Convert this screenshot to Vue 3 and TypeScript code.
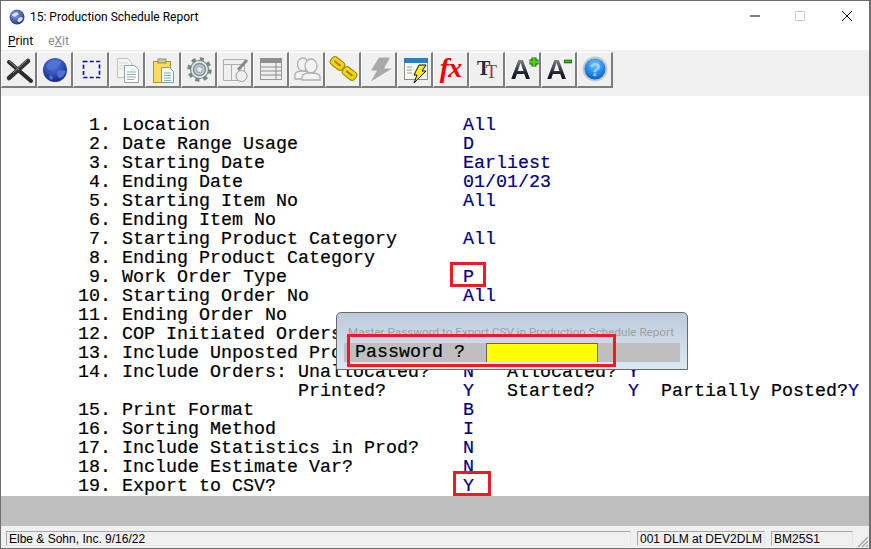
<script setup lang="ts">
interface Part { text: string; value?: boolean }
const pad = (s: string, n: number) => s.padEnd(n, ' ')
const row = (num: string, label: string, value = ''): Part[] => [
  { text: pad(num.padStart(10, ' ') + ' ' + label, 42) },
  { text: value, value: true },
]
const rows: Part[][] = [
  row('1.', 'Location', 'All'),
  row('2.', 'Date Range Usage', 'D'),
  row('3.', 'Starting Date', 'Earliest'),
  row('4.', 'Ending Date', '01/01/23'),
  row('5.', 'Starting Item No', 'All'),
  row('6.', 'Ending Item No'),
  row('7.', 'Starting Product Category', 'All'),
  row('8.', 'Ending Product Category'),
  row('9.', 'Work Order Type', 'P'),
  row('10.', 'Starting Order No', 'All'),
  row('11.', 'Ending Order No'),
  row('12.', 'COP Initiated Orders'),
  row('13.', 'Include Unposted Prod'),
  [
    { text: pad('       14. Include Orders: Unallocated?', 42) },
    { text: 'N', value: true },
    { text: '   Allocated? ' },
    { text: 'Y', value: true },
  ],
  [
    { text: pad('', 27) + pad('Printed?', 15) },
    { text: 'Y', value: true },
    { text: '   Started?   ' },
    { text: 'Y', value: true },
    { text: '  Partially Posted?' },
    { text: 'Y', value: true },
  ],
  row('15.', 'Print Format', 'B'),
  row('16.', 'Sorting Method', 'I'),
  row('17.', 'Include Statistics in Prod?', 'N'),
  row('18.', 'Include Estimate Var?', 'N'),
  row('19.', 'Export to CSV?', 'Y'),
]
</script>

<template>
  <div class="window">
    <header class="titlebar">
      <svg class="app-icon" width="16" height="16" viewBox="0 0 16 16">
        <defs>
          <radialGradient id="ti" cx="0.4" cy="0.35" r="0.7">
            <stop offset="0" stop-color="#8fa8e8" />
            <stop offset="1" stop-color="#1c2f8c" />
          </radialGradient>
        </defs>
        <circle cx="8" cy="8" r="7.5" fill="url(#ti)" />
        <path d="M3 6c2-3 5-3 6-2s-1 2-2 3-3 1-4-1zM9 10c1-2 4-2 5-1-1 3-3 4-4 4s-2-2-1-3z" fill="#dfe7fa" />
      </svg>
      <span class="title">15: Production Schedule Report</span>
      <div class="caption">
        <svg width="46" height="16" viewBox="0 0 46 16"><path d="M18 8h10" stroke="#000" stroke-width="1" /></svg>
        <svg width="46" height="16" viewBox="0 0 46 16"><rect x="17.5" y="3.5" width="9" height="9" fill="none" stroke="#ccc" /></svg>
        <svg width="46" height="16" viewBox="0 0 46 16"><path d="M18 3l10 10M28 3L18 13" stroke="#111" stroke-width="1" /></svg>
      </div>
    </header>

    <nav class="menubar">
      <span class="menu"><u>P</u>rint</span>
      <span class="menu off">e<u>X</u>it</span>
    </nav>

    <div class="toolbar">
      <div class="tool">
        <svg viewBox="0 0 36 37">
          <path d="M8 12l22 19" stroke="#2b2b2b" stroke-width="4" stroke-linecap="round" />
          <path d="M27 11L8 28" stroke="#333" stroke-width="4.500" stroke-linecap="round" />
          <path d="M8 11l10 9M26 10L12 23" stroke="#8a8a8a" stroke-width="1" />
        </svg>
      </div>
      <div class="tool">
        <svg viewBox="0 0 36 37">
          <defs>
            <radialGradient id="gl" cx="0.45" cy="0.3" r="0.75">
              <stop offset="0" stop-color="#5b7fe0" />
              <stop offset="1" stop-color="#0e1f86" />
            </radialGradient>
          </defs>
          <circle cx="18" cy="20" r="12" fill="url(#gl)" />
          <path d="M10 14c4-4 10-5 13-3s-2 5-5 5-1 4-4 4-5-3-4-6zM21 21c3-1 6-1 8 0-1 4-4 7-6 7s-4-5-2-7zM13 25l3 2-1 3-3-2z" fill="#4f73d4" />
        </svg>
      </div>
      <div class="tool">
        <svg viewBox="0 0 36 37">
          <rect x="10.500" y="11.500" width="16" height="16" fill="none" stroke="#0000ff" stroke-width="1.600" stroke-dasharray="4 2.300" />
        </svg>
      </div>
      <div class="tool">
        <svg viewBox="0 0 36 37">
          <path d="M8.500 8.500h10l4 4v15h-14z" fill="#f4f7f1" stroke="#b5c9b8" />
          <path d="M10 13h9M10 16h9M10 19h9" stroke="#cddccf" />
          <path d="M15.500 15.500h10l4 4v13h-14z" fill="#fdfdfd" stroke="#8fa5a5" />
          <path d="M18 22h9M18 24.500h9M18 27h9M18 29.500h7" stroke="#8fb3aa" />
        </svg>
      </div>
      <div class="tool">
        <svg viewBox="0 0 36 37">
          <rect x="8.500" y="11.500" width="17" height="21" fill="#f4df60" stroke="#bf8a2a" />
          <rect x="13" y="9" width="8" height="4" fill="#c8c8a0" stroke="#8f8f6a" />
          <path d="M16.500 17.500h8l4 4v11h-12z" fill="#f8f8f8" stroke="#7e9a9a" />
          <path d="M19 23h7M19 25.500h7M19 28h7M19 30.500h7" stroke="#7fb0a8" />
        </svg>
      </div>
      <div class="tool">
        <svg viewBox="0 0 36 37">
          <circle cx="18.500" cy="19.500" r="10.500" fill="none" stroke="#6f8a84" stroke-width="3.400" stroke-dasharray="4.120 4.120" />
          <circle cx="18.500" cy="19.500" r="9" fill="#e8e8e4" stroke="#6f8a84" stroke-width="1.200" />
          <circle cx="18.500" cy="19.500" r="6" fill="#c2ccd6" stroke="#7d8c98" stroke-width="1.500" />
          <circle cx="18.500" cy="19.500" r="3" fill="#e8ecef" stroke="#8c9aa6" />
        </svg>
      </div>
      <div class="tool">
        <svg viewBox="0 0 36 37">
          <path d="M6.500 9.500h21v21h-21zM6.500 14.500h21M14.500 14.500v16" fill="none" stroke="#aeaeae" />
          <path d="M21 20l9-10" stroke="#8a8a8a" stroke-width="3" />
          <circle cx="24.500" cy="26" r="5.500" fill="#efefef" stroke="#999" />
        </svg>
      </div>
      <div class="tool">
        <svg viewBox="0 0 36 37">
          <rect x="7.500" y="8.500" width="21" height="21" fill="#efefef" stroke="#9b9b9b" />
          <rect x="7" y="8" width="22" height="5" fill="#8f8f8f" />
          <path d="M8 17h20M8 21h20M8 25h20M23 13v17" stroke="#8c8c8c" />
        </svg>
      </div>
      <div class="tool">
        <svg viewBox="0 0 36 37" fill="#f3f3f3" stroke="#b0b0b0" stroke-width="1.300">
          <ellipse cx="14" cy="14.500" rx="5.500" ry="6.500" />
          <path d="M6 29v-4c0-3 4-4 8-4s6 2 6 4v4z" />
          <ellipse cx="22" cy="16" rx="6" ry="7" />
          <path d="M13 30v-3c0-3 4-4 9-4s9 1 9 4v3z" />
        </svg>
      </div>
      <div class="tool">
        <svg viewBox="0 0 36 37">
          <g fill="none" stroke="#9a8500" stroke-width="5" stroke-linejoin="round">
            <rect x="7" y="11" width="11" height="5" rx="1.500" transform="rotate(38 12.500 13.500)" />
            <rect x="19" y="21" width="11" height="5" rx="1.500" transform="rotate(38 24.500 23.500)" />
          </g>
          <g fill="none" stroke="#f3d21a" stroke-width="3" stroke-linejoin="round">
            <rect x="7" y="11" width="11" height="5" rx="1.500" transform="rotate(38 12.500 13.500)" />
            <rect x="19" y="21" width="11" height="5" rx="1.500" transform="rotate(38 24.500 23.500)" />
          </g>
        </svg>
      </div>
      <div class="tool">
        <svg viewBox="0 0 36 37">
          <path d="M17 8h11l-6 11h8L9 32l6-11h-6z" fill="#a9a9a9" transform="translate(1 -0.500)" />
        </svg>
      </div>
      <div class="tool">
        <svg viewBox="0 0 36 37">
          <rect x="7.500" y="8.500" width="23" height="21" fill="#f6f6ee" stroke="#8d8d8d" />
          <rect x="7" y="8" width="24" height="5" fill="#2e7fc0" />
          <path d="M10 17h5M10 20h5M10 23h5" stroke="#a9c8a8" stroke-width="1.500" />
          <path d="M22 15h7l-4 6h4L17 33l3-8h-3z" fill="#ffe81a" stroke="#111" stroke-width="1" />
        </svg>
      </div>
      <div class="tool"><span class="fx">fx</span></div>
      <div class="tool tt">
        <span class="tt-a">T</span><span class="tt-b">T</span>
      </div>
      <div class="tool">
        <span class="big-a">A</span>
        <svg class="over" viewBox="0 0 36 37">
          <path d="M24.500 12h9M29 7.500v9" stroke="#0b5d05" stroke-width="5" />
          <path d="M25 12h8M29 8v8" stroke="#4fd11a" stroke-width="2.800" />
        </svg>
      </div>
      <div class="tool">
        <span class="big-a">A</span>
        <svg class="over" viewBox="0 0 36 37">
          <path d="M23 11.500h8" stroke="#0b5d05" stroke-width="3.500" />
          <path d="M23.500 11.500h7" stroke="#4fd11a" stroke-width="1.500" />
        </svg>
      </div>
      <div class="tool">
        <svg viewBox="0 0 36 37">
          <defs>
            <radialGradient id="hp" cx="0.5" cy="0.3" r="0.75">
              <stop offset="0" stop-color="#7cc4ff" />
              <stop offset="0.6" stop-color="#1f86ec" />
              <stop offset="1" stop-color="#0a58c4" />
            </radialGradient>
          </defs>
          <circle cx="18" cy="19" r="12.500" fill="#c8c8c8" />
          <circle cx="18" cy="19" r="10.500" fill="url(#hp)" />
          <text x="18" y="26" text-anchor="middle" class="qm">?</text>
        </svg>
      </div>
    </div>

    <main class="screen">
      <div class="paper">
        <div v-for="(parts, i) in rows" :key="i" class="line">
          <span v-for="(p, j) in parts" :key="j" :class="{ val: p.value }">{{ p.text }}</span>
        </div>
      </div>
      <div class="floor"></div>

      <div class="mark mark-p"></div>
      <div class="mark mark-y"></div>

      <section class="dialog">
        <div class="dlg-title">Master Password to Export CSV in Production Schedule Report</div>
        <div class="dlg-bar">
          <span class="dlg-label">Password ?</span>
          <span class="dlg-field"></span>
        </div>
      </section>
      <div class="mark mark-pw"></div>
    </main>

    <footer class="statusbar">
      <span class="panel wide">Elbe &amp; Sohn, Inc. 9/16/22</span>
      <span class="panel who">001 DLM at DEV2DLM</span>
      <span class="panel code">BM25S1</span>
      <svg class="grip" width="14" height="14" viewBox="0 0 14 14">
        <path d="M13 3L3 13M13 7L7 13M13 11l-2 2" stroke="#a0a0a0" stroke-width="1.200" />
      </svg>
    </footer>
  </div>
</template>

<style scoped>
.window {
  width: 871px;
  height: 549px;
  box-sizing: border-box;
  border: 1px solid #6e6e6e;
  border-right-width: 2px;
  border-bottom-width: 1px;
  display: flex;
  flex-direction: column;
  background: #f0f0f0;
  overflow: hidden;
}
.titlebar {
  height: 31px;
  flex: none;
  background: #fff;
  display: flex;
  align-items: center;
  padding-left: 8px;
  font: 12px Roboto, "Noto Sans", sans-serif;
  color: #000;
}
.app-icon { margin-right: 5px; }
.title { flex: 1; }
.caption { display: flex; margin-right: -1px; margin-bottom: 2px; }
.menubar {
  height: 18px;
  flex: none;
  background: #fff;
  display: flex;
  gap: 15px;
  padding-left: 7px;
  align-items: center;
  font: 12px Roboto, "Noto Sans", sans-serif;
  color: #000;
}
.menu.off { color: #8a8a8a; }
.toolbar {
  height: 46px;
  flex: none;
  display: flex;
  align-items: flex-start;
  padding-top: 2px;
  box-sizing: border-box;
  background: #f0f0f0;
}
.tool {
  width: 36px;
  height: 36px;
  flex: none;
  box-sizing: border-box;
  position: relative;
  background: #f0f0f0;
  border-top: 1px solid #fff;
  border-left: 1px solid #fff;
  border-right: 2px solid #7d7d7d;
  border-bottom: 2px solid #7d7d7d;
  display: flex;
  align-items: center;
  justify-content: center;
  overflow: hidden;
}
.tool > svg { position: absolute; left: -1px; top: -3px; width: 36px; height: 37px; }
.fx {
  font: italic bold 28px "Liberation Serif", serif;
  color: #f00000;
  letter-spacing: -1px;
  margin-top: -4px;
}
.tt-a, .tt-b {
  font-family: "Liberation Serif", serif;
  font-weight: bold;
  position: absolute;
}
.tt-a { font-size: 20px; color: #26263c; left: 7px; top: 4px; }
.tt-b { font-size: 18px; color: #b02a35; left: 16px; top: 9px; font-weight: normal; }
.big-a {
  font: bold 28px "Liberation Sans", sans-serif;
  background: linear-gradient(#8b8b95 15%, #14162a 65%);
  -webkit-background-clip: text;
  background-clip: text;
  color: transparent;
  filter: drop-shadow(1px 0 #fff) drop-shadow(-1px 0 #fff);
  margin-right: 4px;
}
.qm {
  font: bold 19px "Liberation Sans", sans-serif;
  fill: #9fd0ff;
}
.screen {
  flex: 1;
  position: relative;
  display: flex;
  flex-direction: column;
  min-height: 0;
}
.paper {
  flex: 1;
  background: #fff;
  padding-top: 20px;
  box-sizing: border-box;
}
.line {
  height: 19px;
  line-height: 19px;
  white-space: pre;
  font-family: "Liberation Mono", monospace;
  font-size: 18.33px;
  -webkit-text-stroke: 0.2px currentColor;
  color: #000;
}
.val { color: #000080; }
.floor {
  height: 30px;
  flex: none;
  box-sizing: content-box;
  background: #bfbfbf;
  border-bottom: 1px solid #000;
}
.dialog {
  position: absolute;
  left: 335px;
  top: 216px;
  width: 352px;
  height: 58px;
  box-sizing: border-box;
  border: 1px solid #6a6a6a;
  border-radius: 5px 5px 0 0;
  background: linear-gradient(#bccbdb, #dce8f4);
  padding: 12px 7px 0;
}
.dlg-title {
  font: 11.700px Roboto, "Noto Sans", sans-serif;
  line-height: 14px;
  color: #a0a0a0;
  white-space: nowrap;
  padding-left: 4px;
  height: 18px;
}
.dlg-bar {
  height: 19px;
  background: #bfbfbf;
  display: flex;
  align-items: stretch;
  font-family: "Liberation Mono", monospace;
  font-size: 18.33px;
  -webkit-text-stroke: 0.2px currentColor;
  line-height: 19px;
  color: #000;
}
.dlg-label { margin-left: 11px; width: 131px; flex: none; }
.dlg-field {
  width: 112px;
  flex: none;
  box-sizing: border-box;
  background: #ffff00;
  border: 1px solid #666;
  border-bottom: 0;
}
.mark {
  position: absolute;
  box-sizing: border-box;
  border: 3px solid #ed1c24;
}
.mark-p { left: 449px; top: 166px; width: 36px; height: 25px; }
.mark-y { left: 452px; top: 375px; width: 38px; height: 25px; }
.mark-pw { left: 346px; top: 238px; width: 269px; height: 33px; }
.statusbar {
  height: 22px;
  flex: none;
  display: flex;
  align-items: flex-start;
  padding: 5px 0 0 5px;
  box-sizing: border-box;
  position: relative;
  background: #f0f0f0;
  font: 12px "Liberation Sans", sans-serif;
  color: #000;
}
.panel {
  height: 15px;
  line-height: 14px;
  box-sizing: border-box;
  border: 1px solid #a6a6a6;
  border-right-color: #e6e6e6;
  border-bottom-color: #e6e6e6;
  padding-left: 2px;
  white-space: nowrap;
  overflow: hidden;
  flex: none;
}
.wide { width: 625px; margin-right: 6px; }
.who { width: 128px; margin-right: 6px; }
.code { width: 82px; }
.grip { position: absolute; right: 0; bottom: 0; }
</style>

<style>
html, body { margin: 0; background: #fff; }
</style>
